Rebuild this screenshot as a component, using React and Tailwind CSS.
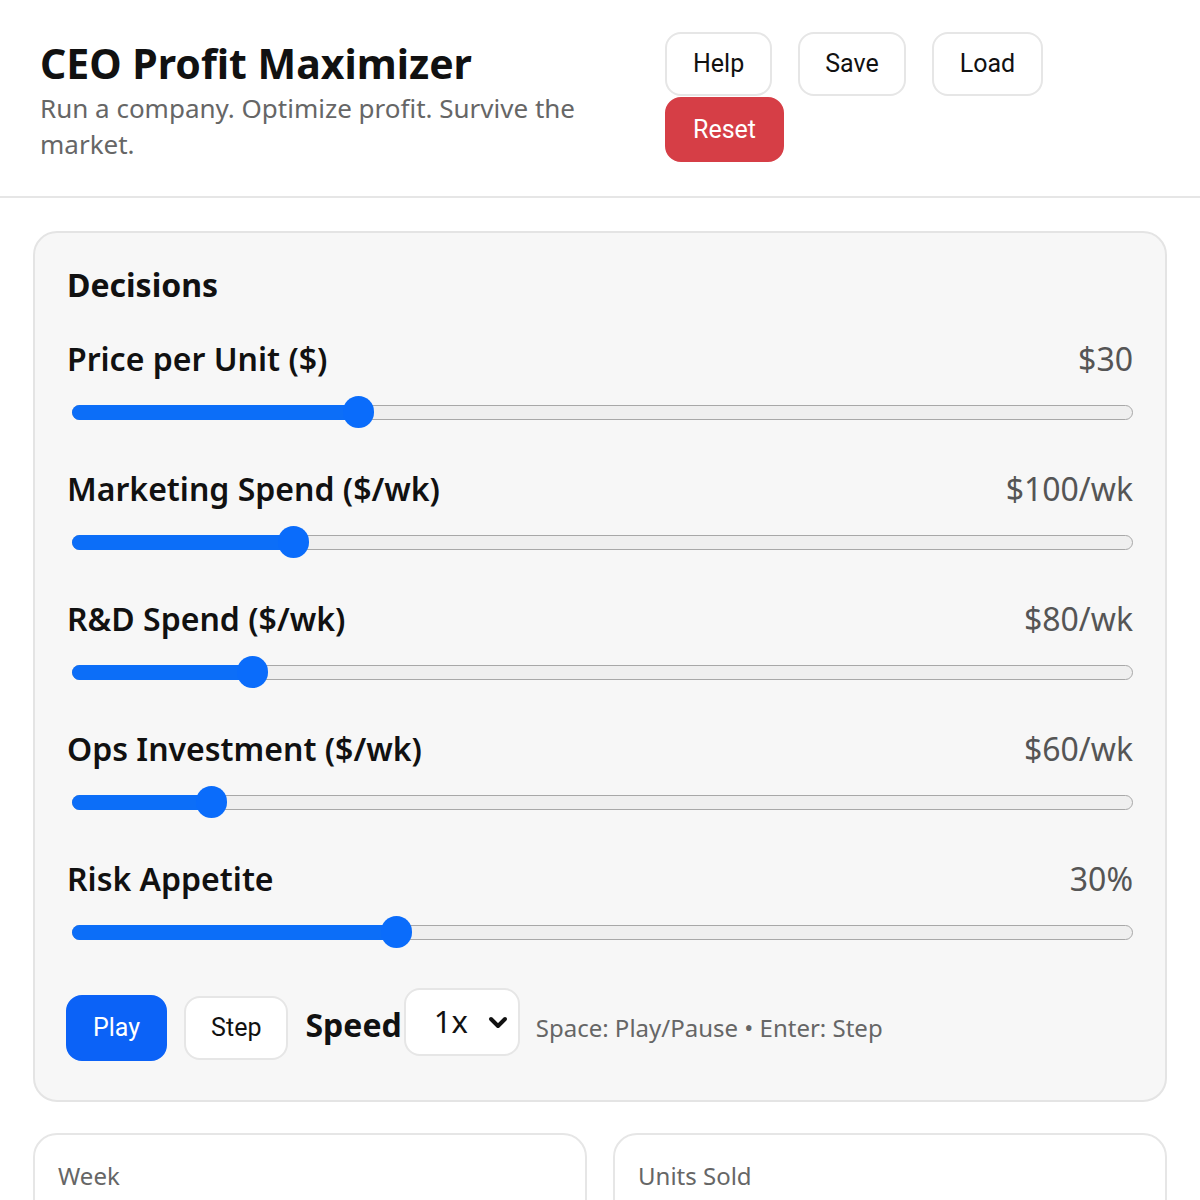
const sliders = [
  { label: 'Price per Unit ($)', value: '$30', pct: 0.263 },
  { label: 'Marketing Spend ($/wk)', value: '$100/wk', pct: 0.2 },
  { label: 'R&D Spend ($/wk)', value: '$80/wk', pct: 0.16 },
  { label: 'Ops Investment ($/wk)', value: '$60/wk', pct: 0.12 },
  { label: 'Risk Appetite', value: '30%', pct: 0.3 },
]

const sans = "font-['Noto_Sans',sans-serif]"
const btn = "font-['Roboto',sans-serif] text-[25px] leading-[28px] rounded-[16px] border-2"

const Slider = ({ pct }) => (
  <div className="relative h-[32px] ml-[5px] flex items-center">
    <div className="w-full h-[15px] rounded-full bg-[#efefef] border-[1.5px] border-[#a8a8a8]"></div>
    <div
      className="absolute left-0 top-[9px] h-[15px] rounded-full bg-[#0c6ef8]"
      style={{ width: `calc(15px + (100% - 30px) * ${pct})` }}
    ></div>
    <div
      className="absolute top-0 w-[31px] h-[32px] rounded-full bg-[#0a6cfb]"
      style={{ left: `calc((100% - 30px) * ${pct})` }}
    ></div>
  </div>
)

export default function App() {
  return (
    <div className={`min-h-screen bg-white ${sans} text-[#111]`}>
      {/* Header */}
      <div className="flex items-start px-[40px] pt-[32px] pb-[34px] border-b-2 border-[#e6e6e6]">
        <div className="w-[600px] shrink-0">
          <h1 className="mt-[10px] text-[41px] leading-[43px] font-bold">CEO Profit Maximizer</h1>
          <p className="mt-[5px] text-[26px] leading-[36px] text-[#666]">
            Run a company. Optimize profit. Survive the market.
          </p>
        </div>
        <div className="ml-[25px] w-[440px] flex flex-wrap gap-x-[26px] gap-y-[1px]">
          <button className={`${btn} h-[64px] px-[26px] bg-white border-[#e6e6e6] text-[#111]`}>Help</button>
          <button className={`${btn} h-[64px] px-[25px] bg-white border-[#e6e6e6] text-[#111]`}>Save</button>
          <button className={`${btn} h-[64px] px-[26px] bg-white border-[#e6e6e6] text-[#111]`}>Load</button>
          <button className={`${btn} h-[65px] px-[26px] bg-[#d63e46] border-[#d63e46] text-white`}>Reset</button>
        </div>
      </div>

      {/* Decisions panel */}
      <div className="mx-[33px] mt-[33px] rounded-[24px] border-2 border-[#e4e4e4] bg-[#f7f7f7] px-[32px] pt-[34px] pb-[39px]">
        <h2 className="text-[32px] leading-[36px] font-bold mb-[38px]">Decisions</h2>
        <div className="flex flex-col gap-[43px]">
          {sliders.map((s, i) => (
            <div key={i}>
              <div className="flex justify-between items-center h-[36px] mb-[19px]">
                <span className="text-[32px] font-semibold">{s.label}</span>
                <span className="text-[32px] text-[#555]">{s.value}</span>
              </div>
              <Slider pct={s.pct} />
            </div>
          ))}
        </div>

        <div className="mt-[40px] flex items-start">
          <button className={`${btn} -ml-[1px] mt-[7px] h-[66px] px-[25px] bg-[#0b62f7] border-[#0b62f7] text-white`}>Play</button>
          <button className={`${btn} mt-[8px] ml-[17px] h-[64px] px-[25px] bg-white border-[#e6e6e6] text-[#111] text-[24px]`}>Step</button>
          <span className="ml-[17px] self-center text-[32px] font-bold">Speed</span>
          <div className="ml-[2px] w-[116px] h-[68px] rounded-[16px] border-2 border-[#e6e6e6] bg-white flex items-center justify-between pl-[28px] pr-[8px]">
            <span className="text-[31px] -mt-[2px]">1x</span>
            <svg width="24" height="24" viewBox="0 0 24 24" fill="none" stroke="#111" strokeWidth="4" strokeLinecap="round" strokeLinejoin="round">
              <path d="M5 9l7 7 7-7" />
            </svg>
          </div>
          <span className="ml-[16px] self-center mt-[6px] text-[24px] text-[#666]">Space: Play/Pause • Enter: Step</span>
        </div>
      </div>

      {/* Stat cards */}
      <div className="mx-[33px] mt-[31px] grid grid-cols-2 gap-[26px]">
        <div className="rounded-[24px] border-2 border-[#e6e6e6] bg-white p-[23px] h-[200px]">
          <div className="text-[24px] leading-[36px] text-[#666]">Week</div>
        </div>
        <div className="rounded-[24px] border-2 border-[#e6e6e6] bg-white p-[23px] h-[200px]">
          <div className="text-[24px] leading-[36px] text-[#666]">Units Sold</div>
        </div>
      </div>
    </div>
  )
}
